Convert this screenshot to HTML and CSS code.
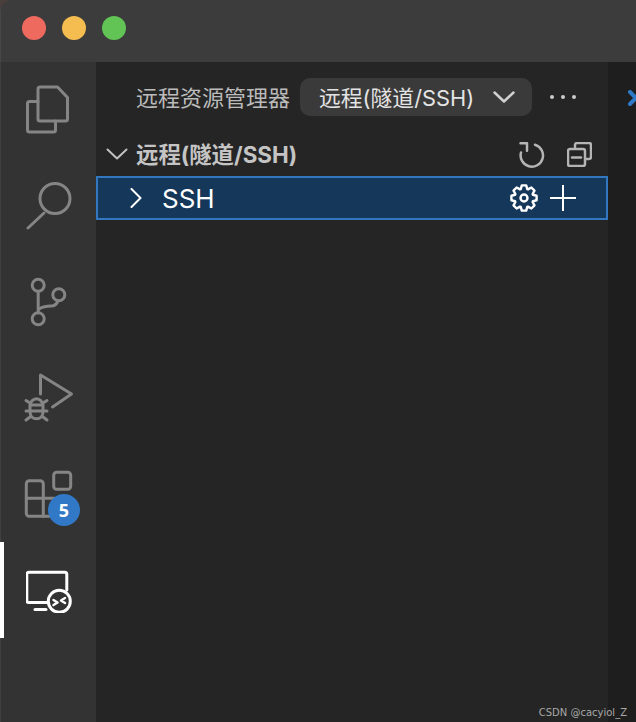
FILE: index.html
```html
<!DOCTYPE html>
<html lang="en">
<head>
    <meta charset="UTF-8">
    <title>远程资源管理器</title>
    <link rel="stylesheet" href="styles.css">
</head>
<body>
    <div class="window">
        <div class="titlebar">
            <span class="light red"></span>
            <span class="light yellow"></span>
            <span class="light green"></span>
        </div>
        <div class="main">
            <nav class="activity">
                <div class="act-item">
                    <svg class="act-icon" width="48" height="52" viewBox="0 0 48 52">
                        <path d="M15 3h17.500l10 10.500v21.500a2 2 0 0 1-2 2h-25.500a2 2 0 0 1-2-2v-30a2 2 0 0 1 2-2z"/>
                        <path d="M13 17.500h-8.500a2 2 0 0 0-2 2v26.500a2 2 0 0 0 2 2h24a2 2 0 0 0 2-2v-9"/>
                    </svg>
                </div>
                <div class="act-item">
                    <svg class="act-icon" width="48" height="50" viewBox="0 0 48 50">
                        <circle cx="30" cy="17.500" r="15"/>
                        <path d="M19 32l-16 15"/>
                    </svg>
                </div>
                <div class="act-item">
                    <svg class="act-icon" width="40" height="50" viewBox="0 0 40 50">
                        <circle cx="9.200" cy="8.300" r="6"/>
                        <circle cx="29.800" cy="17.700" r="6"/>
                        <circle cx="9.200" cy="41.700" r="6"/>
                        <path d="M9.200 14.300v21.400"/>
                        <path d="M10 32c4-2.500 8-3 12-3 4 0 6-2 7-5.500"/>
                    </svg>
                </div>
                <div class="act-item">
                    <svg class="act-icon" width="52" height="52" viewBox="0 0 52 52">
                        <path d="M17.500 22v-19l31 19-19 13"/>
                        <path d="M7 35c0-11 13-11 13 0v5c0 9-13 9-13 0z"/>
                        <path d="M7 33h13M7 31l-4-2.500M20 31l4-2.500M3 39h21M7 45l-4 3M20 45l4 3"/>
                    </svg>
                </div>
                <div class="act-item">
                    <svg class="act-icon" width="52" height="50" viewBox="0 0 52 50">
                        <rect x="30.700" y="3.200" width="17" height="17" rx="3"/>
                        <path d="M6.300 11.800h11a3 3 0 0 1 3 3v32.400h-14a3 3 0 0 1-3-3v-29.400a3 3 0 0 1 3-3z"/>
                        <path d="M3.300 29.300h28M20.300 47.200h10"/>
                    </svg>
                    <span class="badge">5</span>
                </div>
                <div class="act-item active">
                    <svg class="act-icon" width="48" height="46" viewBox="0 0 48 46">
                        <path d="M22 35.500h-19.200a2 2 0 0 1-2-2v-26.300a2 2 0 0 1 2-2h36a2 2 0 0 1 2 2v15.800"/>
                        <path d="M9 42.500h11"/>
                        <circle cx="33.300" cy="34.300" r="11"/>
                        <path class="thin" d="M27.500 33l4 2.500-4 2.500M39 31l-4 2.500 4 2.500"/>
                    </svg>
                </div>
            </nav>
            <section class="sidebar">
                <div class="side-head">
                    <span class="side-title">远程资源管理器</span>
                    <div class="select">
                        <span>远程(隧道/SSH)</span>
                        <svg class="chev-down" width="22" height="12" viewBox="0 0 22 12"><path d="M1.500 1.500l9.500 9 9.500-9"/></svg>
                    </div>
                    <div class="dots"><i></i><i></i><i></i></div>
                </div>
                <div class="section-head">
                    <svg class="section-chev" width="22" height="12" viewBox="0 0 22 12"><path d="M1.500 1.500l9.500 9 9.500-9"/></svg>
                    <span class="section-title">远程(隧道/SSH)</span>
                    <svg class="tool" width="26" height="28" viewBox="0 0 26 28">
                        <path d="M16 4.700A11.200 11.200 0 1 1 2 12.500"/>
                        <path d="M1.500 3.300h6.500v7.400"/>
                    </svg>
                    <svg class="tool" width="25" height="25" viewBox="0 0 25 25">
                        <path d="M8 5v-2a2 2 0 0 1 2-2h12a2 2 0 0 1 2 2v12a2 2 0 0 1-2 2h-3"/>
                        <rect x="1" y="7" width="17" height="17" rx="2"/>
                        <path d="M5 15.500h9"/>
                    </svg>
                </div>
                <div class="row">
                    <svg class="row-chev" width="12" height="20" viewBox="0 0 12 20"><path d="M1.500 1l9 9-9 9"/></svg>
                    <span class="row-label">SSH</span>
                    <svg class="gear" width="28" height="28" viewBox="0 0 28 28">
                        <path d="M10.750 5.070L11.780 1.400H16.220L17.250 5.070L18.010 5.390L21.340 3.510L24.490 6.660L22.610 9.990L22.930 10.750L26.600 11.780V16.220L22.930 17.250L22.610 18.010L24.490 21.340L21.340 24.490L18.010 22.610L17.250 22.930L16.220 26.600H11.780L10.750 22.930L9.990 22.610L6.660 24.490L3.510 21.340L5.390 18.010L5.070 17.250L1.400 16.220V11.780L5.070 10.750L5.390 9.990L3.510 6.660L6.660 3.510L9.990 5.390Z"/>
                        <circle cx="14" cy="14" r="3.500"/>
                    </svg>
                    <svg class="plus" width="26" height="26" viewBox="0 0 26 26"><path d="M0 13h26M13 0v26"/></svg>
                </div>
            </section>
            <div class="editor">
                <svg class="editor-chev" width="9" height="16" viewBox="0 0 9 16"><path d="M2 2l6 6-6 6"/></svg>
            </div>
        </div>
        <div class="watermark">CSDN @cacyiol_Z</div>
    </div>
</body>
</html>
```

FILE: styles.css
```css
* {
    margin: 0;
    padding: 0;
    box-sizing: border-box;
}

body {
    width: 636px;
    height: 722px;
    overflow: hidden;
    background: #4a3f3a;
    font-family: 'Inter', 'Noto Sans CJK SC', sans-serif;
}

svg {
    display: block;
    flex: none;
    fill: none;
    stroke-linecap: round;
    stroke-linejoin: round;
}

.window {
    position: relative;
    display: flex;
    flex-direction: column;
    height: 722px;
    border-radius: 12px 0 0 0;
    overflow: hidden;
}

.titlebar {
    display: flex;
    align-items: center;
    gap: 16px;
    height: 62px;
    padding: 0 0 6px 21px;
    background: #3c3c3c;
    border-left: 1px solid #484848;
}

.light {
    width: 24px;
    height: 24px;
    border-radius: 50%;
}

.red { background: #ee6a5f; }
.yellow { background: #f5bd4f; }
.green { background: #61c454; }

.main {
    flex: 1;
    display: flex;
    min-height: 0;
}

.activity {
    flex: none;
    width: 96px;
    background: #333333;
    border-left: 1px solid #404040;
    display: flex;
    flex-direction: column;
}

.act-item {
    position: relative;
    height: 96px;
    display: flex;
    align-items: center;
    justify-content: center;
}

.act-icon {
    stroke: #858585;
    stroke-width: 3;
}

.active { border-left: 4px solid #ffffff; margin-left: -1px; }
.active .act-icon { stroke: #ffffff; }
.active .thin { stroke-width: 2.500; }

.badge {
    position: absolute;
    left: 47px;
    top: 48px;
    width: 32px;
    height: 32px;
    border-radius: 50%;
    background: #3178c6;
    color: #ffffff;
    font-family: 'Open Sans', sans-serif;
    font-size: 18px;
    font-weight: 700;
    line-height: 32px;
    text-align: center;
}

.sidebar {
    flex: none;
    width: 512px;
    background: #252525;
}

.side-head {
    display: flex;
    align-items: center;
    height: 70px;
    padding: 0 0 0 40px;
}

.side-title {
    width: 164px;
    padding-bottom: 3px;
    color: #bbbbbb;
    font-size: 22px;
    white-space: nowrap;
}

.select {
    display: flex;
    align-items: center;
    justify-content: space-between;
    width: 232px;
    height: 38px;
    padding: 0 17px 0 19px;
    border-radius: 10px;
    background: #3a3a3a;
    color: #e4e4e4;
    font-size: 21.800px;
}

.select span { padding-bottom: 2px; }

.chev-down {
    stroke: #d0d0d0;
    stroke-width: 2.500;
}

.dots {
    display: flex;
    gap: 7px;
    margin-left: 18px;
}

.dots i {
    width: 4px;
    height: 4px;
    border-radius: 50%;
    background: #cccccc;
}

.section-head {
    display: flex;
    align-items: center;
    height: 44px;
    padding: 0 16px 0 10px;
}

.section-chev {
    stroke: #c0c0c0;
    stroke-width: 2;
    margin-right: 8px;
}

.section-title {
    flex: 1;
    padding-bottom: 3px;
    color: #c4c4c4;
    font-size: 22.400px;
    font-weight: 700;
}

.tool {
    stroke: #b4b4b4;
    stroke-width: 2.500;
    margin-left: 22px;
}

.row {
    display: flex;
    align-items: center;
    height: 44px;
    padding: 0 30px 0 32px;
    background: #14375a;
    border: 2px solid #3178c0;
}

.row-chev {
    stroke: #ffffff;
    stroke-width: 2;
    margin-right: 20px;
}

.row-label {
    flex: 1;
    color: #ffffff;
    font-size: 26px;
}

.gear {
    stroke: #ffffff;
    stroke-width: 2.400;
    margin-right: 12px;
}

.plus {
    stroke: #ffffff;
    stroke-width: 2;
}

.editor {
    flex: 1;
    min-width: 0;
    overflow: hidden;
    background: #1e1e1e;
    padding: 28px 0 0 20px;
}

.editor-chev {
    stroke: #3178c6;
    stroke-width: 4;
}

.watermark {
    position: absolute;
    right: 9px;
    bottom: 4px;
    color: #a8a8a8;
    font-family: 'DejaVu Sans', sans-serif;
    font-size: 10px;
}
```
